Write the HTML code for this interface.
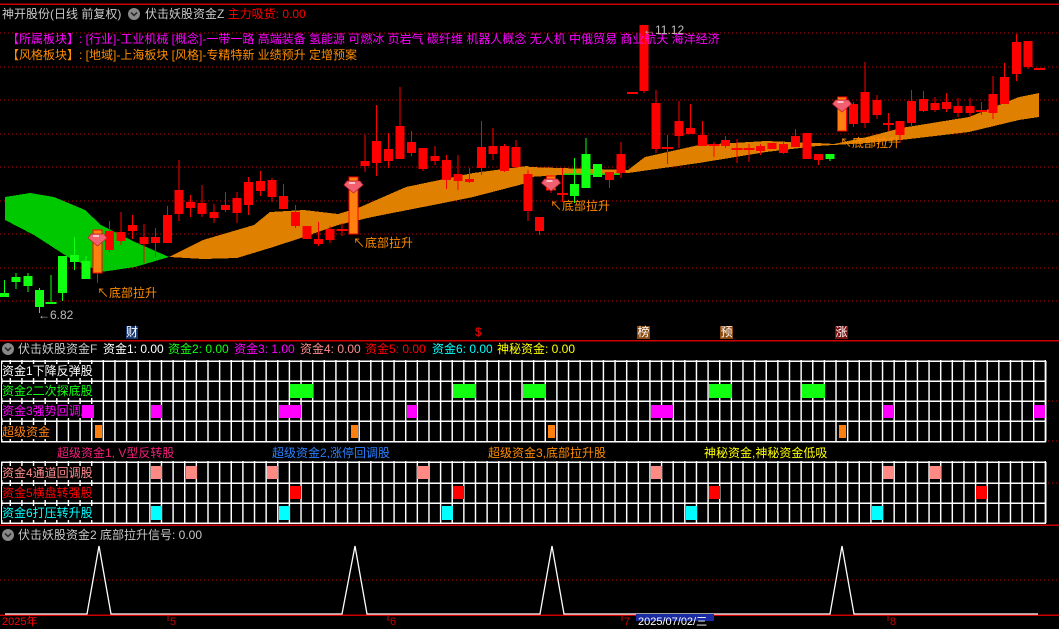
<!DOCTYPE html>
<html><head><meta charset="utf-8"><style>
*{margin:0;padding:0}
body{width:1059px;height:621px;background:#000;overflow:hidden;position:relative;font-family:"Liberation Sans","Noto Sans CJK SC",sans-serif;font-size:12px}
.t{position:absolute;white-space:nowrap;line-height:14px}
.lb{position:absolute;white-space:nowrap;line-height:14px;background:#000;left:2px;font-size:12px}
svg{position:absolute;left:0;top:0}
</style></head><body>
<svg width="1059" height="621" viewBox="0 0 1059 621" shape-rendering="crispEdges">
<defs>
<pattern id="vp" patternUnits="userSpaceOnUse" x="102.6" y="0" width="11.63" height="10"><rect x="0" y="0" width="1.4" height="10" fill="#fff"/></pattern>
</defs>
<!-- separators -->
<line x1="0" y1="4" x2="1059" y2="4" stroke="#c00" stroke-width="1.5"/>
<line x1="0" y1="340.5" x2="1059" y2="340.5" stroke="#c00" stroke-width="1.5"/>
<line x1="0" y1="525" x2="1059" y2="525" stroke="#c00" stroke-width="1.5"/>
<line x1="0" y1="615" x2="1059" y2="615" stroke="#c00" stroke-width="1.5"/>
<!-- dotted grid main -->
<g stroke="#b00" stroke-width="1" stroke-dasharray="1,3">
<line x1="0" y1="33" x2="1059" y2="33"/><line x1="0" y1="67" x2="1059" y2="67"/><line x1="0" y1="100" x2="1059" y2="100"/><line x1="0" y1="134" x2="1059" y2="134"/><line x1="0" y1="167" x2="1059" y2="167"/><line x1="0" y1="201" x2="1059" y2="201"/><line x1="0" y1="234" x2="1059" y2="234"/><line x1="0" y1="268" x2="1059" y2="268"/><line x1="0" y1="301" x2="1059" y2="301"/>
<line x1="1048" y1="401" x2="1059" y2="401"/><line x1="1048" y1="441" x2="1059" y2="441"/><line x1="1048" y1="483" x2="1059" y2="483"/>
<line x1="0" y1="580" x2="1059" y2="580"/>
</g>
<!-- bands -->
<polygon fill="#00c800" points="5,197 30,193 54,197 85,210 101,225 135,242 169,257 135,267 101,272 68,257 34,235 5,220"/>
<polygon fill="#e08000" points="169,257 203,240 254,225 270,212 304,210 338,214 358,208 406,187 473,173 527,166 530,167 560,168 628,170 645,157 699,145 766,141 817,143 834,144 867,137 901,128 969,117 1019,97 1039,93 1039,117 1019,120 969,132 901,140 867,143 817,146 766,152 699,163 628,173 560,175 530,177 527,183 473,197 423,207 372,217 338,225 304,237 270,248 237,258 203,259"/>
<line x1="563" y1="174" x2="620" y2="174" stroke="#00e000" stroke-width="1.5"/>
<!-- red candles -->
<path stroke="#f00" stroke-width="1.2" fill="none" d="M109.5 221V252M121 212V245M132.5 215V239M144 224V263M155.5 228V257M167.5 206V243M179 160V221M190.5 195V217M202 185V217M214 204V223M225.5 192V212M237 192V223M248.5 177V215M260.5 171V196M272 178V202M283.5 184V209M295.5 205V228M307 226V239M318.5 222V246M330 226V243M342 223V236M365 135V172M376.5 105V176M388.5 133V168M400 87V159M411.5 131V156M423 148V171M435 146V165M446.5 155V189M458 155V190M469.5 168V183M481.5 121V175M493 128V160M504.5 144V172M516 140V168M528 170V221M539.5 217V235M562.5 168V202M609.5 172V188M621 142V178M644 25V93M656 90V153M667.5 135V164M679 101V148M690.5 104V134M702.5 121V146M714 142V157M725.5 136V148M737 139V163M749 144V162M760.5 144V155M783.5 142V154M795.5 129V147M818.5 154V165M853.5 102V127M865 62V128M877 95V119M888.5 113V131M900 121V143M911.5 90V126M923.5 91V112M935 97V112M946.5 93V112M958 98V117M970 98V117M981.5 102V115M993 76V119M1004.5 63V104M1016.5 34V81M1028 41V69M97.5 273V283M551 190V193"/>
<g fill="#f00">
<rect x="105" y="231" width="9" height="19"/><rect x="116.5" y="232" width="9" height="9"/><rect x="128" y="225" width="9" height="6"/><rect x="139.5" y="237" width="9" height="7"/><rect x="151" y="237" width="9" height="6"/><rect x="163" y="215" width="9" height="28"/><rect x="174.5" y="190" width="9" height="24"/><rect x="186" y="202" width="9" height="6"/><rect x="197.5" y="203" width="9" height="11"/><rect x="209.5" y="212" width="9" height="6"/><rect x="221" y="205" width="9" height="5"/><rect x="232.5" y="198" width="9" height="15"/><rect x="244" y="182" width="9" height="23"/><rect x="256" y="181" width="9" height="10"/><rect x="267.5" y="180" width="9" height="17"/><rect x="279" y="196" width="9" height="13"/><rect x="291" y="212" width="9" height="14"/><rect x="302.5" y="226" width="9" height="13"/><rect x="314" y="239" width="9" height="5"/><rect x="325.5" y="229" width="9" height="11"/><rect x="336.5" y="229" width="11" height="2"/>
<rect x="360.5" y="161" width="9" height="5"/><rect x="372" y="141" width="9" height="22"/><rect x="384" y="149" width="9" height="12"/><rect x="395.5" y="126" width="9" height="33"/><rect x="407" y="142" width="9" height="11"/><rect x="418.5" y="148" width="9" height="21"/><rect x="430.5" y="156" width="9" height="5"/><rect x="442" y="160" width="9" height="20"/><rect x="453.5" y="174" width="9" height="7"/><rect x="465" y="179" width="9" height="3"/><rect x="477" y="147" width="9" height="21"/><rect x="488.5" y="146" width="9" height="8"/><rect x="500" y="146" width="9" height="25"/><rect x="511.5" y="147" width="9" height="20"/><rect x="523.5" y="174" width="9" height="37"/><rect x="535" y="217" width="9" height="14"/><rect x="557" y="193" width="11" height="2"/><rect x="605" y="172" width="9" height="8"/><rect x="616.5" y="154" width="9" height="19"/><rect x="627" y="92" width="11" height="2"/><rect x="639.5" y="25" width="9" height="66"/><rect x="651.5" y="103" width="9" height="46"/><rect x="662" y="147" width="11" height="2"/><rect x="674.5" y="121" width="9" height="15"/><rect x="686" y="128" width="9" height="6"/><rect x="698" y="135" width="9" height="11"/><rect x="708.5" y="144" width="11" height="2"/><rect x="721" y="140" width="9" height="6"/><rect x="731.5" y="148" width="11" height="2"/><rect x="743.5" y="148" width="11" height="2"/><rect x="756" y="146" width="9" height="5"/><rect x="767.5" y="143" width="9" height="6"/><rect x="779" y="144" width="9" height="9"/><rect x="791" y="136" width="9" height="11"/><rect x="802.5" y="133" width="9" height="26"/><rect x="814" y="154" width="9" height="6"/>
<rect x="849" y="104" width="9" height="20"/><rect x="860.5" y="92" width="9" height="31"/><rect x="872.5" y="100" width="9" height="15"/><rect x="883" y="123" width="11" height="2"/><rect x="895.5" y="121" width="9" height="14"/><rect x="907" y="101" width="9" height="22"/><rect x="919" y="99" width="9" height="12"/><rect x="930.5" y="103" width="9" height="7"/><rect x="942" y="102" width="9" height="7"/><rect x="953.5" y="106" width="9" height="7"/><rect x="965.5" y="106" width="9" height="7"/><rect x="976" y="110" width="11" height="2"/><rect x="988.5" y="94" width="9" height="19"/><rect x="1000" y="77" width="9" height="27"/><rect x="1012" y="42" width="9" height="32"/><rect x="1023.5" y="41" width="9" height="26"/><rect x="1034" y="68" width="11" height="2"/>
</g>
<!-- green candles -->
<path stroke="#1f1" stroke-width="1.2" fill="none" d="M4.5 280V297M16 273V289M28 273V292M39.5 288V313M51 275V303M62.5 256V301M74.5 237V270M86 256V279M574.5 158V203M586 138V188M830 154V161"/>
<g fill="#1f1">
<rect x="0" y="293" width="9" height="4"/><rect x="11.5" y="277" width="9" height="5"/><rect x="23.5" y="276" width="9" height="10"/><rect x="35" y="290" width="9" height="17"/><rect x="45.5" y="302" width="11" height="2"/><rect x="58" y="256" width="9" height="37"/><rect x="70" y="255" width="9" height="7"/><rect x="81.5" y="261" width="9" height="18"/><rect x="570" y="184" width="9" height="12"/><rect x="581.5" y="154" width="9" height="34"/><rect x="593" y="164" width="9" height="13"/><rect x="825.5" y="154" width="9" height="5"/>
</g>
<!-- orange bars -->
<g fill="#ff8010" stroke="#f00" stroke-width="1">
<rect x="93" y="230" width="9" height="43"/><rect x="349" y="177" width="9" height="57"/><rect x="546.5" y="176" width="9" height="14"/><rect x="837.5" y="97" width="9" height="34"/>
</g>
<!-- gems -->
<g fill="#f06070" stroke="#c02030" stroke-width="0.8" shape-rendering="auto">
<polygon points="91,234 104,234 107,238 97.5,246 88,238"/>
<polygon points="347,181 360,181 363,185 353.5,193 344,185"/>
<polygon points="544.5,179 557.5,179 560.5,183 551,191 541.5,183"/>
<polygon points="835.5,100 848.5,100 851.5,104 842,112 832.5,104"/>
</g>
<g fill="#ffc0c8" shape-rendering="auto"><rect x="93" y="235" width="6" height="2"/><rect x="349" y="182" width="6" height="2"/><rect x="546.5" y="180" width="6" height="2"/><rect x="837.5" y="101" width="6" height="2"/></g>
<!-- marker row -->
<rect x="126" y="326" width="12" height="13" fill="#1a3870"/>
<rect x="637" y="326" width="13" height="13" fill="#8a4a10"/>
<rect x="720" y="326" width="13" height="13" fill="#8a4a10"/>
<rect x="835" y="326" width="13" height="13" fill="#7a1010"/>
<!-- grid panel -->
<rect x="1" y="360" width="1045" height="82" fill="url(#vp)"/>
<rect x="1" y="461" width="1045" height="63" fill="url(#vp)"/>
<g stroke="#fff" stroke-width="1.5">
<line x1="1" y1="361" x2="1046" y2="361"/><line x1="1" y1="381" x2="1046" y2="381"/><line x1="1" y1="401" x2="1046" y2="401"/><line x1="1" y1="421" x2="1046" y2="421"/><line x1="1" y1="441.5" x2="1046" y2="441.5"/>
<line x1="1" y1="462" x2="1046" y2="462"/><line x1="1" y1="483" x2="1046" y2="483"/><line x1="1" y1="503" x2="1046" y2="503"/><line x1="1" y1="523" x2="1046" y2="523"/>
<line x1="1.5" y1="361" x2="1.5" y2="441.5"/><line x1="1045.5" y1="361" x2="1045.5" y2="441.5"/><line x1="1.5" y1="462" x2="1.5" y2="523"/><line x1="1045.5" y1="462" x2="1045.5" y2="523"/>
</g>
</svg>
<!-- labels over grid -->
<div class="lb" style="top:364px;color:#fff">资金1下降反弹股</div>
<div class="lb" style="top:384px;color:#1f1">资金2二次探底股</div>
<div class="lb" style="top:404px;color:#f0f">资金3强势回调股</div>
<div class="lb" style="top:425px;color:#ff8010">超级资金</div>
<div class="lb" style="top:466px;color:#ff8c8c">资金4通道回调股</div>
<div class="lb" style="top:486px;color:#f00">资金5横盘转强股</div>
<div class="lb" style="top:506px;color:#0ff">资金6打压转升股</div>
<svg width="1059" height="621" viewBox="0 0 1059 621" shape-rendering="crispEdges">
<g fill="#1f1"><rect x="290" y="384" width="23" height="14"/><rect x="453" y="384" width="23" height="14"/><rect x="523" y="384" width="23" height="14"/><rect x="709" y="384" width="23" height="14"/><rect x="802" y="384" width="23" height="14"/></g>
<g fill="#f0f"><rect x="82" y="405" width="12" height="13"/><rect x="151" y="405" width="11" height="13"/><rect x="279" y="405" width="22" height="13"/><rect x="407" y="405" width="10" height="13"/><rect x="651" y="405" width="22" height="13"/><rect x="883" y="405" width="11" height="13"/><rect x="1034" y="405" width="11" height="13"/></g>
<g fill="#ff8010"><rect x="95" y="425" width="7" height="13"/><rect x="351" y="425" width="7" height="13"/><rect x="548" y="425" width="7" height="13"/><rect x="839" y="425" width="7" height="13"/></g>
<g fill="#ff8a84"><rect x="151" y="466" width="11" height="13"/><rect x="186" y="466" width="11" height="13"/><rect x="267" y="466" width="11" height="13"/><rect x="417" y="466" width="12" height="13"/><rect x="651" y="466" width="11" height="13"/><rect x="883" y="466" width="11" height="13"/><rect x="930" y="466" width="11" height="13"/></g>
<g fill="#f00"><rect x="290" y="486" width="11" height="13"/><rect x="453" y="486" width="11" height="13"/><rect x="709" y="486" width="11" height="13"/><rect x="976" y="486" width="11" height="13"/></g>
<g fill="#0ff"><rect x="151" y="506" width="11" height="14"/><rect x="279" y="506" width="11" height="14"/><rect x="442" y="506" width="11" height="14"/><rect x="686" y="506" width="11" height="14"/><rect x="872" y="506" width="11" height="14"/></g>
<!-- bottom panel -->
<path d="M5 614H87L99 546L111 614H342L355 546L367 614H540L552 546L564 614H830L842 546L854 614H1038" stroke="#fff" stroke-width="1.3" fill="none" shape-rendering="auto"/>
<rect x="636" y="614" width="78" height="7" fill="#1a2aa0"/>
<g stroke="#c00"><line x1="168" y1="615" x2="168" y2="621"/><line x1="388" y1="615" x2="388" y2="621"/><line x1="622" y1="615" x2="622" y2="621"/><line x1="888" y1="615" x2="888" y2="621"/></g>
<!-- circle icons -->
<g shape-rendering="auto">
<circle cx="134" cy="14" r="6" fill="#888"/><path d="M131 12.5L134 15.5L137 12.5" stroke="#222" stroke-width="1.5" fill="none"/>
<circle cx="8" cy="349" r="6" fill="#888"/><path d="M5 347.5L8 350.5L11 347.5" stroke="#222" stroke-width="1.5" fill="none"/>
<circle cx="8" cy="535" r="6" fill="#888"/><path d="M5 533.5L8 536.5L11 533.5" stroke="#222" stroke-width="1.5" fill="none"/>
</g>
</svg>
<!-- texts -->
<div class="t" style="left:2px;top:7px;color:#c8c8c8">神开股份(日线 前复权)</div>
<div class="t" style="left:145px;top:7px;color:#c8c8c8">伏击妖股资金Z <span style="color:#f00">主力吸货: 0.00</span></div>
<div class="t" style="left:7px;top:32px;color:#f0f">【所属板块】: [行业]-工业机械 [概念]-一带一路 高端装备 氢能源 可燃冰 页岩气 碳纤维 机器人概念 无人机 中俄贸易 商业航天 海洋经济</div>
<div class="t" style="left:7px;top:48px;color:#ff8c00">【风格板块】: [地域]-上海板块 [风格]-专精特新 业绩预升 定增预案</div>
<div class="t" style="left:643px;top:23px;color:#bbb">←11.12</div>
<div class="t" style="left:38px;top:308px;color:#bbb">←6.82</div>
<div class="t" style="left:97px;top:286px;color:#ff8c00">↖底部拉升</div>
<div class="t" style="left:353px;top:236px;color:#ff8c00">↖底部拉升</div>
<div class="t" style="left:550px;top:199px;color:#ff8c00">↖底部拉升</div>
<div class="t" style="left:840px;top:136px;color:#ff8c00">↖底部拉升</div>
<div class="t" style="left:126px;top:325px;color:#fff;width:12px;text-align:center">财</div>
<div class="t" style="left:475px;top:325px;color:#f00">$</div>
<div class="t" style="left:637px;top:325px;color:#fff;width:13px;text-align:center">榜</div>
<div class="t" style="left:720px;top:325px;color:#fff;width:13px;text-align:center">预</div>
<div class="t" style="left:835px;top:325px;color:#fff;width:13px;text-align:center">涨</div>
<div class="t" style="left:18px;top:342px;color:#c8c8c8">伏击妖股资金F</div>
<div class="t" style="left:103px;top:342px;color:#fff">资金1: 0.00</div>
<div class="t" style="left:168px;top:342px;color:#1f1">资金2: 0.00</div>
<div class="t" style="left:234px;top:342px;color:#f0f">资金3: 1.00</div>
<div class="t" style="left:300px;top:342px;color:#ff8c8c">资金4: 0.00</div>
<div class="t" style="left:365px;top:342px;color:#f00">资金5: 0.00</div>
<div class="t" style="left:432px;top:342px;color:#0ff">资金6: 0.00</div>
<div class="t" style="left:497px;top:342px;color:#ff0">神秘资金: 0.00</div>
<div class="t" style="left:57px;top:446px;color:#f0207a">超级资金1, V型反转股</div>
<div class="t" style="left:272px;top:446px;color:#2a80ff">超级资金2,涨停回调股</div>
<div class="t" style="left:488px;top:446px;color:#ff8c00">超级资金3,底部拉升股</div>
<div class="t" style="left:704px;top:446px;color:#ff0">神秘资金,神秘资金低吸</div>
<div class="t" style="left:18px;top:528px;color:#c8c8c8">伏击妖股资金2 底部拉升信号: 0.00</div>
<div class="t" style="left:2px;top:615px;color:#f00;font-size:11px">2025年</div>
<div class="t" style="left:170px;top:615px;color:#c00;font-size:11px">5</div>
<div class="t" style="left:390px;top:615px;color:#c00;font-size:11px">6</div>
<div class="t" style="left:624px;top:615px;color:#c00;font-size:11px">7</div>
<div class="t" style="left:638px;top:615px;color:#fff;font-size:11px">2025/07/02/三</div>
<div class="t" style="left:890px;top:615px;color:#c00;font-size:11px">8</div>
</body></html>
